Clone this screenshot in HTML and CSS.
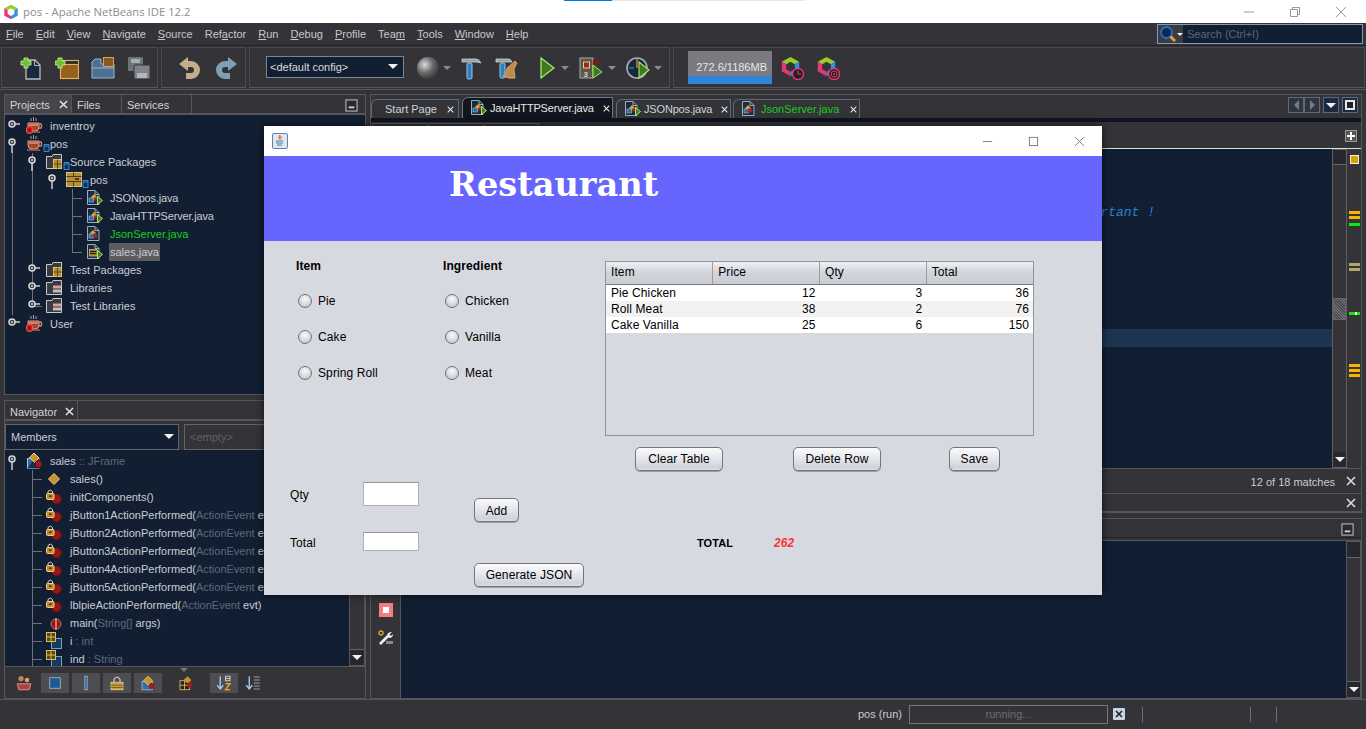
FILE: index.html
```html
<!DOCTYPE html>
<html lang="en">
<head>
<meta charset="utf-8">
<title>pos - Apache NetBeans IDE 12.2</title>
<link rel="stylesheet" href="styles.css">
</head>
<body>
<svg class="defs" xmlns="http://www.w3.org/2000/svg">
  <symbol id="x" viewBox="0 0 10 10"><path d="M1 1L9 9M9 1L1 9" fill="none" stroke="currentColor" stroke-width="1.6"/></symbol>
  <symbol id="min" viewBox="0 0 14 14"><rect x="1" y="1" width="12" height="12" fill="#2a2a2e" stroke="#d0d0d0"/><rect x="4" y="8" width="6" height="2" fill="#d0d0d0"/></symbol>
  <symbol id="cube" viewBox="0 0 24 24"><path d="M12 1L22 6.500L17 9.500L12 6.500L7 9.500L2 6.500Z" fill="#9acb2c"/><path d="M2 6.500L7 9.500V15L12 18V23L2 17.500Z" fill="#e8366f"/><path d="M22 6.500V17.500L12 23V18L17 15V9.500Z" fill="#2f8fe0"/></symbol>

  <symbol id="tc" viewBox="0 0 20 18"><path d="M13 7H18" stroke="#cfcfcf" stroke-width="1.500"/><circle cx="10" cy="7" r="3" fill="#3a3a3a" stroke="#d8d8d8" stroke-width="1.500"/><circle cx="10" cy="7" r="1" fill="#ddd"/></symbol>
  <symbol id="te" viewBox="0 0 20 18"><path d="M10 10V18" stroke="#cfcfcf" stroke-width="1.500"/><circle cx="10" cy="7" r="3" fill="#3a3a3a" stroke="#d8d8d8" stroke-width="1.500"/><circle cx="10" cy="7" r="1" fill="#ddd"/></symbol>

  <symbol id="cup" viewBox="0 0 24 18"><path d="M5 1V4M7.500 0V4M10 1V4" stroke="#a79c95"/><path d="M2 6H13V10Q13 14 9 14H6Q2 14 2 10Z" fill="#a5452e" stroke="#e2a18a"/><path d="M13 7H15Q16.500 9 15 11H12.500" fill="none" stroke="#d9876c" stroke-width="1.300"/><path d="M3 8H12" stroke="#efc0ae"/><path d="M1 15H14" stroke="#b9644c" stroke-width="1.400"/></symbol>
  <symbol id="cupl" viewBox="0 0 24 18"><use href="#cup"/><rect x="0.500" y="9.500" width="6" height="7" rx="2.500" fill="#c8201e" stroke="#f05050"/><rect x="2.500" y="11.500" width="2" height="3" fill="#7a1010"/></symbol>
  <symbol id="bdg" viewBox="0 0 24 18"><path d="M18 9.500H23V16.500H18Z" fill="#12304f" stroke="#2e8be0"/><path d="M18 11H23" stroke="#2e8be0"/></symbol>
  <symbol id="cupb" viewBox="0 0 24 18"><use href="#cup"/><use href="#bdg"/></symbol>
  <symbol id="fold" viewBox="0 0 24 18"><path d="M0.500 3.500H6L7 1.500H15.500V15.500H0.500Z" fill="#3a3b40" stroke="#c9c9c9"/><rect x="7.500" y="6.500" width="8" height="9" fill="#b78d36" stroke="#e2c36f"/><path d="M11.500 6.500V15.500M7.500 11H15.500" stroke="#5c4516"/></symbol>
  <symbol id="foldb" viewBox="0 0 24 18"><use href="#fold"/><use href="#bdg"/></symbol>
  <symbol id="foldl" viewBox="0 0 24 18"><path d="M0.500 3.500H6L7 1.500H15.500V15.500H0.500Z" fill="#3a3b40" stroke="#c9c9c9"/><rect x="7" y="6.500" width="8" height="3" fill="#d8a0a0"/><rect x="7" y="10.500" width="8" height="3" fill="#c0c0c0"/></symbol>
  <symbol id="pkg" viewBox="0 0 24 18"><rect x="0.500" y="1.500" width="15" height="14" fill="#b78d36" stroke="#e0c272"/><path d="M0.500 5.500H15.500M0.500 10.500H15.500M7.500 1.500V5.500M7.500 10.500V15.500" stroke="#4f3b12"/><rect x="9" y="7" width="4" height="2" fill="#4f3b12"/><use href="#bdg" x="-1"/></symbol>

  <symbol id="page" viewBox="0 0 24 18"><path d="M1.500 1.500H9L13 5.500V15.500H1.500Z" fill="#1b2c42" stroke="#9eacbb"/><path d="M9 1.500V5.500H13" fill="none" stroke="#9eacbb"/></symbol>
  <symbol id="jf" viewBox="0 0 24 18"><use href="#page"/><path d="M5 8L8 5L11 8L8 11Z" fill="#d6a12c"/><rect x="3" y="9" width="4.500" height="4" fill="#2c6aa8" stroke="#9ec4e6" stroke-width=".6"/><circle cx="9.500" cy="10" r="1.700" fill="#a52525"/><path d="M11.500 7.500L16.500 11.500L11.500 15.500Z" fill="#3f7a22" stroke="#a5e86a"/></symbol>
  <symbol id="js" viewBox="0 0 24 18"><use href="#page"/><path d="M4 8L7 5L10 8L7 11Z" fill="#d6a12c"/><rect x="3" y="9" width="4.500" height="4" fill="#2c6aa8" stroke="#9ec4e6" stroke-width=".6"/><circle cx="9" cy="10.500" r="2.300" fill="#a52525"/></symbol>
  <symbol id="jl" viewBox="0 0 24 18"><use href="#page"/><rect x="3.500" y="6.500" width="7.500" height="6.500" fill="#96752c" stroke="#e0c272" stroke-width=".7"/><path d="M4 8.500H10.500M4 10.500H10.500" stroke="#2d2208"/><path d="M11.500 7.500L16.500 11.500L11.500 15.500Z" fill="#3f7a22" stroke="#a5e86a"/></symbol>

  <symbol id="cls" viewBox="0 0 24 18"><path d="M1.500 6.500H13V16.500H1.500Z" fill="#2f6ba6" stroke="#a7c9e8"/><path d="M1.500 16.500L8 6.500H13V16.500Z" fill="#14324e"/><path d="M3.500 5.500L8 1L13 6L8.500 10.500Z" fill="#c8932c" stroke="#f0d080"/><circle cx="12.500" cy="12" r="3.500" fill="#a01c1c" stroke="#50100f"/></symbol>
  <symbol id="ctr" viewBox="0 0 24 18"><path d="M8 3.500L13.500 9L8 14.500L2.500 9Z" fill="#c8932c" stroke="#f0d080"/></symbol>
  <symbol id="mth" viewBox="0 0 24 18"><circle cx="10.500" cy="11" r="5" fill="#901818" stroke="#5a1010"/><rect x="0.500" y="5.500" width="7.500" height="6" rx="1" fill="#c0892a" stroke="#f0d080"/><path d="M2 5.500V3.500Q4.250 0.500 6.500 3.500V5.500" fill="none" stroke="#d8d8d8"/><rect x="3" y="7.500" width="2.500" height="1.500" fill="#4a2a05"/></symbol>
  <symbol id="mn" viewBox="0 0 24 18"><circle cx="10" cy="10" r="5" fill="#901818" stroke="#d06a60"/><path d="M10 4V16" stroke="#e4a090" stroke-width="1.400"/></symbol>
  <symbol id="fld" viewBox="0 0 24 18"><rect x="5.500" y="6.500" width="10" height="10" fill="#173a5c" stroke="#6fa4d0"/><rect x="0.500" y="0.500" width="9" height="9" fill="#5a4515" stroke="#e0bc5a"/><path d="M5 .5V9.500M.5 5H9.500" stroke="#e0bc5a"/></symbol>

  <symbol id="i-new" viewBox="0 0 24 24"><path d="M7 4H16L21 9V23H7Z" fill="#1a2a3c" stroke="#b6bcc2" stroke-width="1.300"/><path d="M15.500 4V9.500H21" fill="none" stroke="#b6bcc2"/><path d="M5 2H9V5H12V9H9V12H5V9H2V5H5Z" fill="#69c22c" stroke="#d4f0a8" stroke-width=".8"/></symbol>
  <symbol id="i-prj" viewBox="0 0 24 24"><rect x="5.500" y="4.500" width="18" height="18" fill="#98601a" stroke="#d8b070" stroke-width="1.200"/><rect x="5.500" y="4.500" width="18" height="4" fill="#35302a" stroke="#d8b070"/><path d="M3 2H7V5H10V9H7V12H3V9H0V5H3Z" fill="#69c22c" stroke="#d4f0a8" stroke-width=".8"/></symbol>
  <symbol id="i-opn" viewBox="0 0 24 24"><path d="M1 22V6L4 3H10V8H23V22Z" fill="#4c6f92" stroke="#9cb6cc"/><rect x="12.500" y="1.500" width="10" height="9" fill="#8a5a1c" stroke="#caa46a"/><path d="M1 12H23" stroke="#9cb6cc"/></symbol>
  <symbol id="i-sav" viewBox="0 0 24 24"><rect x="1" y="1" width="15" height="14" rx="1" fill="#6d7379"/><rect x="4" y="3" width="9" height="4" fill="#a8adb2"/><rect x="7" y="9" width="16" height="14" rx="1" fill="#7e848a" stroke="#34343a"/><rect x="10" y="17" width="10" height="5" fill="#b4b8bc"/></symbol>
  <symbol id="i-und" viewBox="0 0 24 24"><path d="M8 8H13A6 6 0 0 1 13 20H8" fill="none" stroke="#c4ae8c" stroke-width="6"/><path d="M1 8L10 1V15Z" fill="#c4ae8c"/></symbol>
  <symbol id="i-red" viewBox="0 0 24 24"><path d="M16 8H11A6 6 0 0 0 11 20H16" fill="none" stroke="#7f9fb6" stroke-width="6"/><path d="M23 8L14 1V15Z" fill="#7f9fb6"/></symbol>
  <symbol id="i-ham" viewBox="0 0 24 24"><path d="M3 3H17Q20 3 22 7L18 6H3Z" fill="#9a9ea3" stroke="#d0d4d8" stroke-width=".8"/><rect x="8" y="7" width="5" height="16" rx="1.500" fill="#2c7fc0" stroke="#9cc6e4"/></symbol>
  <symbol id="i-brm" viewBox="0 0 24 24"><path d="M1 3H13Q16 3 17 6H1Z" fill="#9a9ea3" stroke="#d0d4d8" stroke-width=".8"/><rect x="5" y="7" width="5" height="15" rx="1.500" fill="#2c7fc0" stroke="#9cc6e4"/><path d="M12 12L20 5L22 7L19 13L20 22Q13 23 8 20Q12 17 12 12Z" fill="#c08a48" stroke="#e8c48c" stroke-width=".7"/></symbol>
  <symbol id="i-run" viewBox="0 0 24 24"><path d="M6 2L19 12L6 22Z" fill="#3f7a22" stroke="#a5e86a" stroke-width="1.300"/></symbol>
  <symbol id="i-dbg" viewBox="0 0 24 24"><rect x="1" y="2" width="13" height="20" fill="#5a5648" stroke="#b0ab98"/><rect x="4.500" y="6" width="6" height="6" fill="#a02a20" stroke="#e0c8a0"/><path d="M14 4H22L17 10H14Z" fill="#7a1c16"/><path d="M14 9L23 16L14 22Z" fill="#3f7a22" stroke="#a5e86a"/><text x="4.500" y="20.500" class="svgnum">3</text></symbol>
  <symbol id="i-gau" viewBox="0 0 24 24"><circle cx="11" cy="12" r="10" fill="#15283c" stroke="#a8aeb4" stroke-width="1.600"/><path d="M11 3V12" stroke="#e08030" stroke-width="1.400"/><path d="M3 12H8" stroke="#2e7bc4" stroke-width="1.400"/><path d="M13 6L23 14L13 22Z" fill="#3f7a22" stroke="#a5e86a" stroke-width="1.100"/></symbol>
  <symbol id="i-pr1" viewBox="0 0 24 24"><use href="#cube" width="21" height="21"/><circle cx="18" cy="18" r="5.500" fill="#222" stroke="#e8366f" stroke-width="1.400"/><path d="M18 14.500V18H21" fill="none" stroke="#e8366f"/></symbol>
  <symbol id="i-pr2" viewBox="0 0 24 24"><use href="#cube" width="21" height="21"/><circle cx="18" cy="18" r="5.500" fill="#222" stroke="#e8366f" stroke-width="1.400"/><circle cx="18" cy="18" r="3" fill="none" stroke="#e8366f"/><circle cx="18" cy="18" r="1" fill="#e8366f"/></symbol>
</svg>

<header class="winbar">
  <svg class="winlogo"><use href="#cube"/></svg>
  <span class="wintitle">pos - Apache NetBeans IDE 12.2</span>
  <span class="loadstrip"><span class="loadfill"></span></span>
  <div class="winctl">
    <svg class="winbtn" viewBox="0 0 12 12"><path d="M1 6H11" stroke="#999" fill="none"/></svg>
    <svg class="winbtn" viewBox="0 0 12 12"><path d="M1.500 3.500H8.500V10.500H1.500ZM3.500 3.500V1.500H10.500V8.500H8.500" stroke="#999" fill="none"/></svg>
    <svg class="winbtn" viewBox="0 0 12 12"><path d="M1 1L11 11M11 1L1 11" stroke="#999" fill="none"/></svg>
  </div>
</header>

<nav class="menubar">
  <span><u>F</u>ile</span><span><u>E</u>dit</span><span><u>V</u>iew</span><span><u>N</u>avigate</span><span><u>S</u>ource</span><span>Ref<u>a</u>ctor</span><span><u>R</u>un</span><span><u>D</u>ebug</span><span><u>P</u>rofile</span><span>Tea<u>m</u></span><span><u>T</u>ools</span><span><u>W</u>indow</span><span><u>H</u>elp</span>
  <div class="search">
    <span class="searchicon">
      <svg class="searchglass" viewBox="0 0 16 16"><circle cx="6.500" cy="6.500" r="5.500" fill="#0d2a50" stroke="#2a6fc0" stroke-width="1.800"/><path d="M10.500 10.500L15 15" stroke="#e8a030" stroke-width="3"/></svg>
      <i class="caret white"></i>
    </span>
    <span class="searchtext">Search (Ctrl+I)</span>
  </div>
</nav>

<section class="toolbar">
  <div class="tgroup g1">
    <i class="grip"></i>
    <svg class="ti"><use href="#i-new"/></svg><svg class="ti"><use href="#i-prj"/></svg><svg class="ti"><use href="#i-opn"/></svg><svg class="ti"><use href="#i-sav"/></svg>
  </div>
  <div class="tgroup g2">
    <i class="grip"></i>
    <svg class="ti"><use href="#i-und"/></svg><svg class="ti"><use href="#i-red"/></svg>
  </div>
  <div class="tgroup g3">
    <i class="grip"></i>
    <div class="config"><span>&lt;default config&gt;</span><i class="caret white big"></i></div>
    <span class="globe"></span><i class="caret"></i>
    <svg class="ti m8"><use href="#i-ham"/></svg>
    <svg class="ti"><use href="#i-brm"/></svg>
    <svg class="ti m16"><use href="#i-run"/></svg><i class="caret c2"></i>
    <svg class="ti m10"><use href="#i-dbg"/></svg><i class="caret c5"></i>
    <svg class="ti m10"><use href="#i-gau"/></svg><i class="caret"></i>
  </div>
  <div class="tgroup g4">
    <i class="grip"></i>
    <div class="memory">272.6/1186MB</div>
    <svg class="ti m8"><use href="#i-pr1"/></svg><svg class="ti"><use href="#i-pr2"/></svg>
  </div>
</section>

<main class="workspace">
  <div class="leftcol">
    <section class="panel projects">
      <div class="ptabs">
        <span class="ptab active">Projects <svg class="xs"><use href="#x"/></svg></span>
        <span class="ptab files">Files</span>
        <span class="ptab services">Services</span>
        <svg class="minbtn"><use href="#min"/></svg>
      </div>
      <div class="tree">
        <div class="row"><span class="c"><svg><use href="#tc"/></svg></span><svg class="ic"><use href="#cupl"/></svg>inventroy</div>
        <div class="row"><span class="c"><svg><use href="#te"/></svg></span><svg class="ic"><use href="#cupb"/></svg>pos</div>
        <div class="row"><span class="c v"></span><span class="c v"><svg><use href="#te"/></svg></span><svg class="ic"><use href="#foldb"/></svg>Source Packages</div>
        <div class="row"><span class="c v"></span><span class="c v"></span><span class="c"><svg><use href="#te"/></svg></span><svg class="ic"><use href="#pkg"/></svg>pos</div>
        <div class="row tight"><span class="c v"></span><span class="c v"></span><span class="c"></span><span class="c j"></span><svg class="ic"><use href="#jf"/></svg>JSONpos.java</div>
        <div class="row tight"><span class="c v"></span><span class="c v"></span><span class="c"></span><span class="c j"></span><svg class="ic"><use href="#jf"/></svg>JavaHTTPServer.java</div>
        <div class="row green"><span class="c v"></span><span class="c v"></span><span class="c"></span><span class="c j"></span><svg class="ic"><use href="#js"/></svg>JsonServer.java</div>
        <div class="row"><span class="c v"></span><span class="c v"></span><span class="c"></span><span class="c e"></span><svg class="ic"><use href="#jl"/></svg><span class="sel">sales.java</span></div>
        <div class="row"><span class="c v"></span><span class="c v"><svg><use href="#tc"/></svg></span><svg class="ic"><use href="#fold"/></svg>Test Packages</div>
        <div class="row"><span class="c v"></span><span class="c v"><svg><use href="#tc"/></svg></span><svg class="ic"><use href="#foldl"/></svg>Libraries</div>
        <div class="row"><span class="c v"></span><span class="c e"><svg><use href="#tc"/></svg></span><svg class="ic"><use href="#foldl"/></svg>Test Libraries</div>
        <div class="row"><span class="c"><svg><use href="#tc"/></svg></span><svg class="ic"><use href="#cupl"/></svg>User</div>
      </div>
    </section>

    <section class="panel navigator">
      <div class="ptabs">
        <span class="ptab active nav">Navigator <svg class="xs"><use href="#x"/></svg></span>
      </div>
      <div class="navcombos">
        <div class="combo members"><span>Members</span><i class="caret white big"></i></div>
        <div class="combo empty"><span>&lt;empty&gt;</span></div>
      </div>
      <div class="navbody">
        <div class="tree navtree">
          <div class="row"><span class="c"><svg><use href="#te"/></svg></span><svg class="ic"><use href="#cls"/></svg>sales&nbsp;<b class="dim">:: JFrame</b></div>
          <div class="row"><span class="c"></span><span class="c j"></span><svg class="ic"><use href="#ctr"/></svg>sales()</div>
          <div class="row"><span class="c"></span><span class="c j"></span><svg class="ic"><use href="#mth"/></svg>initComponents()</div>
          <div class="row"><span class="c"></span><span class="c j"></span><svg class="ic"><use href="#mth"/></svg>jButton1ActionPerformed(<b class="dim">ActionEvent</b>&nbsp;evt)</div>
          <div class="row"><span class="c"></span><span class="c j"></span><svg class="ic"><use href="#mth"/></svg>jButton2ActionPerformed(<b class="dim">ActionEvent</b>&nbsp;evt)</div>
          <div class="row"><span class="c"></span><span class="c j"></span><svg class="ic"><use href="#mth"/></svg>jButton3ActionPerformed(<b class="dim">ActionEvent</b>&nbsp;evt)</div>
          <div class="row"><span class="c"></span><span class="c j"></span><svg class="ic"><use href="#mth"/></svg>jButton4ActionPerformed(<b class="dim">ActionEvent</b>&nbsp;evt)</div>
          <div class="row"><span class="c"></span><span class="c j"></span><svg class="ic"><use href="#mth"/></svg>jButton5ActionPerformed(<b class="dim">ActionEvent</b>&nbsp;evt)</div>
          <div class="row"><span class="c"></span><span class="c j"></span><svg class="ic"><use href="#mth"/></svg>lblpieActionPerformed(<b class="dim">ActionEvent</b>&nbsp;evt)</div>
          <div class="row"><span class="c"></span><span class="c j"></span><svg class="ic"><use href="#mn"/></svg>main(<b class="dim">String[]</b>&nbsp;args)</div>
          <div class="row"><span class="c"></span><span class="c j"></span><svg class="ic"><use href="#fld"/></svg>i&nbsp;<b class="dim">: int</b></div>
          <div class="row"><span class="c"></span><span class="c j"></span><svg class="ic"><use href="#fld"/></svg>ind&nbsp;<b class="dim">: String</b></div>
        </div>
        <div class="vscroll navscroll">
          <span class="track"></span>
          <span class="sbtn"><i class="caret white"></i></span>
        </div>
      </div>
      <div class="filters">
        <svg class="fi" viewBox="0 0 24 24"><circle cx="8" cy="6" r="3.500" fill="#c08a48"/><circle cx="16" cy="8" r="3" fill="#d8a868"/><path d="M3 13H21L19 21H5Z" fill="#b04040" stroke="#e8b0b0"/></svg>
        <span class="fb b1"><svg class="fi" viewBox="0 0 24 24"><rect x="5" y="5" width="14" height="14" fill="#1e5a92" stroke="#a8c8e4"/></svg></span>
        <span class="fb"><svg class="fi" viewBox="0 0 24 24"><rect x="10.500" y="3" width="3" height="18" fill="#1e5a92" stroke="#a8c8e4"/></svg></span>
        <span class="fb"><svg class="fi" viewBox="0 0 24 24"><rect x="4" y="11" width="16" height="10" fill="#c89a4a" stroke="#f0d080"/><path d="M8 11V7Q12 1 16 7V11" fill="none" stroke="#d8d8d8" stroke-width="1.500"/><path d="M4 15H20M4 18H20" stroke="#6a4c14"/></svg></span>
        <span class="fb"><svg class="fi" viewBox="0 0 24 24"><path d="M4 10H18V21H4Z" fill="#2f6ba6" stroke="#a7c9e8"/><path d="M6 9L12 3L18 9L12 15Z" fill="#c8932c" stroke="#f0d080"/><circle cx="17" cy="16" r="4" fill="#a01c1c"/></svg></span>
        <svg class="fi free" viewBox="0 0 24 24"><rect x="4" y="9" width="13" height="12" fill="#2a2410" stroke="#f0d080"/><path d="M4 15H17M10 9V21" stroke="#f0d080"/><path d="M9 8L14 3L19 8L14 13Z" fill="#c8932c"/><circle cx="17" cy="14" r="3.500" fill="#a01c1c"/></svg>
        <span class="fb az"><svg class="fi" viewBox="0 0 24 24"><path d="M7 3V19M3 15L7 20L11 15" fill="none" stroke="#a8c8e4" stroke-width="1.800"/><path d="M14 3H20V9H14ZM14 6H20" fill="none" stroke="#d0d0d0" stroke-width="1.400"/><path d="M14 13H20L14 21H20" fill="none" stroke="#e0a030" stroke-width="2"/></svg></span>
        <svg class="fi m6" viewBox="0 0 24 24"><path d="M7 3V19M3 15L7 20L11 15" fill="none" stroke="#a8c8e4" stroke-width="1.800"/><path d="M13 4H21M13 8H21M13 12H21M13 16H21M13 20H21" stroke="#a0a0a0" stroke-width="1.600"/></svg>
      </div>
    </section>
  </div>

  <div class="rightcol">
    <section class="editorpanel">
      <div class="etabs">
        <span class="etab start">Start Page <svg class="xs sm"><use href="#x"/></svg></span>
        <span class="etab active http tight"><svg class="fic"><use href="#jf"/></svg>JavaHTTPServer.java <svg class="xs sm"><use href="#x"/></svg></span>
        <span class="etab jpos tight"><svg class="fic"><use href="#jf"/></svg>JSONpos.java <svg class="xs sm"><use href="#x"/></svg></span>
        <span class="etab jsrv"><svg class="fic"><use href="#js"/></svg><span class="greentext">JsonServer.java</span> <svg class="xs sm"><use href="#x"/></svg></span>
        <div class="tabctl">
          <span class="navpair"><span class="nb"><i class="tri left"></i></span><span class="nb"><i class="tri right"></i></span></span>
          <span class="nb dark"><i class="caret white big"></i></span>
          <span class="nb dark"><i class="sq"></i></span>
        </div>
      </div>
      <div class="darkstrip"></div>
      <div class="edtools">
        <span class="edtab"></span><span class="edtab"></span><span class="edtab"></span>
        <svg class="splitic" viewBox="0 0 12 12"><rect x=".5" y=".5" width="11" height="11" fill="#555" stroke="#999"/><path d="M6 2V10M2 6H10" stroke="#fff" stroke-width="2"/></svg>
      </div>
      <div class="edbody">
        <div class="code">
          <div class="codeline comment">rtant !</div>
          <div class="codeline current"></div>
        </div>
        <div class="vscroll edscroll">
          <span class="sbtn"><i class="caret white up"></i></span>
          <span class="track"></span>
          <span class="thumb"></span>
          <span class="track"></span>
          <span class="sbtn"><i class="caret white"></i></span>
        </div>
        <div class="stripe">
          <i class="box"></i>
          <i class="mk y s1st"></i><i class="mk y s2nd"></i><i class="mk g s3rd"></i>
          <i class="mk o s4th"></i><i class="mk o s2nd"></i>
          <i class="mk w s5th"></i>
          <i class="mk y s6th"></i><i class="mk y s2nd"></i><i class="mk y s2nd"></i>
        </div>
      </div>
      <div class="findbar"><span class="matches">12 of 18 matches</span><svg class="xl"><use href="#x"/></svg></div>
      <div class="findbar second"><svg class="xl"><use href="#x"/></svg></div>
    </section>

    <section class="output">
      <div class="ohead"><svg class="minbtn"><use href="#min"/></svg></div>
      <div class="ostrip"></div>
      <div class="obody">
        <div class="oside">
          <svg class="stop" viewBox="0 0 14 14"><rect width="14" height="14" fill="#f08080"/><rect x="4" y="4" width="6" height="6" fill="#fff"/></svg>
          <svg class="wrench" viewBox="0 0 16 16"><circle cx="3" cy="3" r="2" fill="none" stroke="#e0a030" stroke-width="1.400"/><path d="M2 14L10 6" stroke="#eee" stroke-width="2.600"/><path d="M9 6Q9 2 14 2L11.500 4.500L13 6L15 4Q15 8 11 8Z" fill="#eee"/><path d="M8 11H15V14H8Z" fill="#888"/></svg>
        </div>
        <div class="oconsole"></div>
        <div class="vscroll oscroll">
          <span class="sbtn"><i class="caret white up"></i></span>
          <span class="track"></span>
          <span class="sbtn"><i class="caret white"></i></span>
        </div>
      </div>
    </section>
  </div>
</main>

<footer class="status">
  <span class="runlabel">pos (run)</span>
  <span class="progress">running...</span>
  <svg class="pcancel" viewBox="0 0 12 12"><rect width="12" height="12" rx="1" fill="#c8d4e4"/><path d="M3 3L9 9M9 3L3 9" stroke="#222" stroke-width="1.600"/></svg>
  <i class="sep s1"></i><i class="sep s2"></i><i class="sep s3"></i>
</footer>

<div class="dialog">
  <div class="dtitle">
    <svg class="javaic" viewBox="0 0 16 16"><rect x=".5" y=".5" width="15" height="15" rx="1.500" fill="#dfe8f0" stroke="#5d84a6"/><path d="M8 2Q6 5 8 6Q10 4 8.500 3" fill="none" stroke="#e0702a" stroke-width="1.200"/><path d="M4 8H11M4 10H11M5 12H10" stroke="#4d7fa6"/></svg>
    <div class="dctl">
      <svg viewBox="0 0 12 12"><path d="M1 6H11" stroke="#777" fill="none"/></svg>
      <svg viewBox="0 0 12 12"><rect x="1.500" y="1.500" width="9" height="9" stroke="#777" fill="none"/></svg>
      <svg viewBox="0 0 12 12"><path d="M1 1L11 11M11 1L1 11" stroke="#777" fill="none"/></svg>
    </div>
  </div>
  <div class="dhead"><h1>Restaurant</h1></div>
  <div class="dbody">
    <div class="dtop">
      <div class="optcol">
        <h2>Item</h2>
        <label class="radio"><i></i>Pie</label>
        <label class="radio"><i></i>Cake</label>
        <label class="radio"><i></i>Spring Roll</label>
      </div>
      <div class="optcol ing">
        <h2>Ingredient</h2>
        <label class="radio"><i></i>Chicken</label>
        <label class="radio"><i></i>Vanilla</label>
        <label class="radio"><i></i>Meat</label>
      </div>
      <div class="tablecol">
        <div class="tablebox">
          <table>
            <thead><tr><th>Item</th><th>Price</th><th>Qty</th><th>Total</th></tr></thead>
            <tbody>
              <tr><td>Pie Chicken</td><td>12</td><td>3</td><td>36</td></tr>
              <tr><td>Roll Meat</td><td>38</td><td>2</td><td>76</td></tr>
              <tr><td>Cake Vanilla</td><td>25</td><td>6</td><td>150</td></tr>
            </tbody>
          </table>
        </div>
        <div class="tablebtns">
          <button class="btn clear">Clear Table</button>
          <button class="btn del">Delete Row</button>
          <button class="btn save">Save</button>
        </div>
      </div>
    </div>
    <div class="dbottom">
      <div class="fields">
        <div class="field qty"><span>Qty</span><i class="input"></i></div>
        <div class="field tot"><span>Total</span><i class="input"></i></div>
      </div>
      <div class="actions">
        <button class="btn add">Add</button>
        <button class="btn gen">Generate JSON</button>
      </div>
      <div class="sum"><b>TOTAL</b><em>262</em></div>
    </div>
  </div>
</div>
</body>
</html>
```
FILE: styles.css
```css
* { box-sizing: border-box; }
html, body { margin: 0; padding: 0; }
body {
  width: 1366px; height: 729px; overflow: hidden; position: relative;
  background: #343338; color: #cfd3d9;
  font: 11px "Liberation Sans", Arial, sans-serif;
  display: flex; flex-direction: column;
}
.defs { display: none; }
i { display: block; font-style: normal; }
svg { display: block; flex: none; }
.tight { letter-spacing: -.17px; }

/* Window title */
.winbar { height: 23px; background: #fff; display: flex; align-items: center; padding-left: 3px; flex: none; }
.winlogo { width: 16px; height: 16px; }
.wintitle { margin-left: 4px; color: #8c8c8c; font: 11.3px "Open Sans", sans-serif; }
.loadstrip { width: 241px; height: 1px; background: #e6e6e6; margin-left: 373px; align-self: flex-start; }
.loadfill { display: block; width: 48px; height: 1px; background: #0078d7; }
.winctl { margin-left: auto; display: flex; gap: 34px; padding-right: 19px; }
.winbtn { width: 12px; height: 12px; }

/* Menu */
.menubar { height: 22px; flex: none; display: flex; align-items: center; gap: 12px; padding-left: 6px; color: #c5c9cf; font-size: 11px; }
.menubar u { text-underline-offset: 1px; }
.search { margin-left: auto; margin-right: 3px; width: 206px; height: 20px; border: 1px solid #7d9cc0; display: flex; background: #121f33; }
.searchicon { width: 25px; background: #3c3b40; display: flex; align-items: center; gap: 1px; padding-left: 2px; flex: none; }
.searchglass { width: 16px; height: 16px; }
.searchtext { color: #5d6673; padding-left: 4px; line-height: 18px; font-size: 11px; }

/* Toolbar */
.toolbar { height: 45px; flex: none; display: flex; gap: 3px; padding: 1px; border-top: 1px solid #232327; border-bottom: 1px solid #56565b; }
.tgroup { display: flex; align-items: center; padding-left: 5px; border: 1px solid #48484d; border-bottom-color: #56565b; }
.g1 { width: 157px; } .g2 { width: 85px; padding-left: 4px; } .g3 { width: 421px; padding-left: 4px; } .g4 { flex: 1; padding-left: 4px; }
.grip { width: 5px; height: 30px; background: radial-gradient(circle, #6d6d70 40%, transparent 50%) 0 0/2px 2px; }
.ti { width: 24px; height: 24px; margin-left: 12px; }
.grip + .ti { margin-left: 7px; }
.ti.m8 { margin-left: 8px; } .ti.m10 { margin-left: 10px; } .ti.m16 { margin-left: 16px; } .fi.m6 { margin-left: 6px; }
.caret { width: 0; height: 0; border: 4px solid transparent; border-top: 4px solid #8b8b8e; border-bottom: 0; margin-left: 4px; flex: none; }
.caret.c2 { margin-left: 2px; } .caret.c5 { margin-left: 5px; }
.caret.white { border-top-color: #f2f2f2; margin-left: 0; border-width: 3px 3px 0; }
.caret.white.big { border-width: 5px 5px 0; }
.sbtn .caret.white { border-width: 5px 5px 0; }
.sbtn .caret.white.up { border-width: 0 5px 5px; border-color: transparent transparent #f2f2f2; }
.config { width: 138px; height: 22px; margin-left: 7px; margin-top: -2px; background: #121f33; border: 1px solid #7b8592; display: flex; align-items: center; justify-content: space-between; padding: 0 5px 0 3px; font-size: 11px; color: #d8dade; }
.globe { width: 22px; height: 22px; margin-left: 13px; border-radius: 50%; background: radial-gradient(circle at 35% 35%, #dcdcdc, #6c6c6c 40%, #2a2a2a 85%); }
.memory { width: 84px; height: 33px; margin-left: 5px; background: linear-gradient(#7b7a80 25px, #2f86d8 25px); color: #e6e6e8; font-size: 11px; display: flex; align-items: center; justify-content: flex-end; padding: 0 5px 2px 0; }

/* Workspace */
.workspace { flex: 1; min-height: 0; display: flex; gap: 4px; padding: 4px 4px 0 4px; }
.leftcol { width: 362px; display: flex; flex-direction: column; gap: 5px; }
.rightcol { width: 992px; display: flex; flex-direction: column; }
.panel { border: 1px solid #56565b; display: flex; flex-direction: column; min-height: 0; }
.projects { height: 301px; }
.navigator { flex: 1; }
.ptabs { height: 20px; flex: none; display: flex; align-items: stretch; border-bottom: 2px solid #56565b; }
.ptab { display: flex; align-items: center; padding: 1px 0 0 5px; border-right: 1px solid #56565b; color: #cfd3d9; font-size: 11px; }
.ptab.active { width: 67px; background: #46454b; justify-content: space-between; padding-right: 3px; }
.ptab.files { width: 50px; } .ptab.services { width: 70px; }
.ptab.nav { width: 73px; background: transparent; padding-top: 3px; }
.xs { width: 9px; height: 9px; color: #e6e6e6; }
.xs.sm { width: 7px; height: 7px; margin-left: auto; }
.minbtn { width: 13px; height: 13px; margin: 2px 7px 0 auto; align-self: center; }
.tree { flex: 1; background: #121f33; overflow: hidden; color: #c9cdd4; padding-top: 2px; }
.row { height: 18px; margin-left: -3px; display: flex; align-items: center; white-space: nowrap; font-size: 11px; }
.row.green { color: #18cf18; }
.c { width: 20px; height: 18px; flex: none; }
.c svg { width: 20px; height: 18px; }
.c.v { background: linear-gradient(#6f7278, #6f7278) 10px 0/1px 100% no-repeat; }
.c.j { background: linear-gradient(#6f7278, #6f7278) 10px 0/1px 100% no-repeat, linear-gradient(#6f7278, #6f7278) 10px 9px/10px 1px no-repeat; }
.c.e { background: linear-gradient(#6f7278, #6f7278) 10px 0/1px 9px no-repeat, linear-gradient(#6f7278, #6f7278) 10px 9px/10px 1px no-repeat; }
.ic { width: 24px; height: 18px; margin-left: 4px; flex: none; }
.sel { background: #5c5c5f; padding: 0 1px; margin-left: -1px; line-height: 18px; }
.dim { font-weight: normal; color: #5d6a7a; }

.navcombos { height: 29px; flex: none; display: flex; align-items: center; gap: 5px; padding-top: 2px; }
.combo { height: 26px; display: flex; align-items: center; padding: 0 5px; background: #121f33; border: 1px solid #63646a; font-size: 11px; }
.combo.members { width: 174px; justify-content: space-between; padding-right: 4px; color: #c9cdd4; }
.combo.empty { width: 180px; background: #343338; color: #5f6368; }
.navbody { height: 216px; flex: none; display: flex; background: #121f33; }
.vscroll { width: 16px; flex: none; display: flex; flex-direction: column; background: #343338; border: 1px solid #56565b; }
.track { flex: 1; display: block; border-bottom: 1px solid #66666b; }
.sbtn { height: 15px; flex: none; display: flex; align-items: center; justify-content: center; background: #27282f; }
.filters { flex: 1; display: flex; align-items: center; padding-left: 10px; border-top: 1px solid #56565b; position: relative; }
.filters::before { content: ""; position: absolute; left: 175px; top: 1px; border: 4px solid transparent; border-top-color: #77777b; border-bottom: 0; }
.fi { width: 18px; height: 18px; }
.fb { width: 28px; height: 20px; margin-left: 3px; background: #4d4d52; display: flex; align-items: center; justify-content: center; }
.fb.b1 { margin-left: 8px; }
.fi.free { margin-left: 15px; }
.fb.az { margin-left: 15px; }

/* Editor */
.editorpanel { height: 419px; flex: none; display: flex; flex-direction: column; border: 1px solid #56565b; border-top: 0; }
.etabs { height: 24px; flex: none; display: flex; align-items: flex-end; gap: 3px; border-top: 1px solid #56565b; }
.etab { height: 19px; display: flex; align-items: center; border: 1px solid #5a6b80; border-bottom: 0; border-top-left-radius: 6px; color: #cfd3d9; font-size: 11px; padding: 0 2px 0 7px; }
.etab.start { width: 88px; padding-left: 13px; padding-right: 4px; }
.etab.http { width: 151px; }
.etab.jpos { width: 115px; }
.etab.jsrv { width: 127px; margin-left: -1px; }
.etab.active { height: 21px; background: #14161e; color: #e8e8e8; border-color: #6c7787; }
.fic { width: 24px; height: 18px; margin-right: -4px; }
.greentext { color: #18cf18; }
.tabctl { margin-left: auto; display: flex; gap: 3px; align-self: flex-start; margin-top: 2px; padding-right: 3px; }
.navpair { display: flex; }
.nb { width: 16px; height: 16px; border: 1px solid #566a80; display: flex; align-items: center; justify-content: center; background: #33343b; }
.nb.dark { background: #1a2a40; }
.tri { width: 0; height: 0; border: 5px solid transparent; }
.tri.left { border-right-color: #6b7f92; border-left: 0; }
.tri.right { border-left-color: #6b7f92; border-right: 0; }
.sq { width: 10px; height: 10px; border: 2px solid #e6e6e6; background: #222; }
.darkstrip { height: 4px; flex: none; background: #0e1520; }
.edtools { height: 26px; flex: none; display: flex; padding: 1px 0 0 1px; align-items: flex-start; gap: 1px; }
.edtab { width: 55px; height: 6px; border: 1px solid #56565b; }
.splitic { width: 12px; height: 12px; margin: 7px 4px 0 auto; }
.edbody { height: 320px; flex: none; display: flex; border-top: 1px solid #ddd; }
.code { flex: 1; background: #121f33; padding-top: 55px; }
.codeline { height: 18px; }
.comment { font: italic 13px/18px "Liberation Mono", monospace; color: #2f7fcf; text-align: right; padding-right: 177px; }
.current { background: #1d3550; margin-top: 107px; }
.edscroll { width: 15px; border-color: #5f5f64; }
.edscroll .sbtn { border-bottom: 1px solid #66666b; }
.edscroll .sbtn:last-child { border-bottom: 0; }
.edscroll .track { border-bottom: 0; }
.thumb { height: 22px; flex: none; display: block; border: 1px solid #66666b; background: repeating-linear-gradient(45deg, #4a4a4f 0 1px, #6d6d72 1px 2px); }
.stripe { width: 14px; flex: none; display: flex; flex-direction: column; align-items: center; padding-top: 6px; }
.box { width: 9px; height: 9px; background: #dba100; border: 1px solid #f2f2f2; }
.mk { width: 11px; height: 3px; }
.mk.y { background: #f7b500; } .mk.g { background: #14e614; } .mk.o { background: #b0a868; }
.mk.w { background: linear-gradient(90deg, #14e614 55%, #fff 55% 70%, #14e614 70%); }
.s1st { margin-top: 47px; } .s2nd { margin-top: 2px; } .s3rd { margin-top: 4px; } .s4th { margin-top: 37px; } .s5th { margin-top: 41px; } .s6th { margin-top: 49px; }
.findbar { height: 25px; flex: none; display: flex; align-items: center; justify-content: flex-end; border-top: 1px solid #56565b; padding-right: 5px; color: #c9cdd4; font-size: 11px; gap: 11px; }
.matches { padding-top: 1px; }
.findbar.second { height: 20px; border-bottom: 1px solid #56565b; flex: 1; }
.xl { width: 10px; height: 10px; color: #dcdcdc; }

/* Output */
.output { flex: 1; display: flex; flex-direction: column; border: 1px solid #56565b; margin-top: 5px; min-height: 0; }
.ohead { height: 18px; flex: none; display: flex; align-items: center; }
.ostrip { height: 4px; flex: none; border-top: 1px solid #232327; border-bottom: 1px solid #56565b; }
.obody { flex: 1; display: flex; min-height: 0; }
.oside { width: 30px; flex: none; display: flex; flex-direction: column; align-items: center; border-right: 1px solid #56565b; padding-top: 62px; gap: 13px; }
.stop { width: 14px; height: 14px; }
.wrench { width: 16px; height: 16px; }
.oconsole { flex: 1; background: #121f33; }
.oscroll { width: 15px; }
.oscroll .track { border-top: 1px solid #66666b; }

/* Status */
.status { height: 30px; flex: none; border-top: 1px solid #56565b; display: flex; align-items: center; padding: 0 0 1px 858px; font-size: 11px; }
.runlabel { color: #c9cdd4; width: 51px; }
.progress { width: 199px; height: 19px; border: 1px solid #77777b; color: #6f7075; display: flex; align-items: center; justify-content: center; }
.pcancel { width: 12px; height: 12px; margin-left: 5px; }
.sep { width: 1px; height: 15px; background: #69707c; }
.s1 { margin-left: 17px; } .s2 { margin-left: 107px; } .s3 { margin-left: 25px; }

/* Java dialog */
.dialog { position: absolute; left: 264px; top: 126px; width: 838px; height: 469px; background: #d6d9e0; color: #000; font: 12px "Liberation Sans", Arial, sans-serif; letter-spacing: .1px; display: flex; flex-direction: column; box-shadow: 0 0 9px rgba(0, 0, 0, .65); }
.dtitle { height: 30px; flex: none; background: #fff; display: flex; align-items: center; padding-left: 8px; }
.javaic { width: 16px; height: 16px; margin-top: -1px; }
.dctl { margin-left: auto; display: flex; gap: 35px; padding-right: 17px; }
.dctl svg { width: 11px; height: 11px; }
.dhead { height: 85px; flex: none; background: #6666ff; padding-left: 185px; }
.dhead h1 { margin: 0; color: #fff; font: bold 33.6px/56px "DejaVu Serif", serif; letter-spacing: 0; }
.dbody { flex: 1; display: flex; flex-direction: column; }
.dtop { height: 241px; flex: none; display: flex; padding: 20px 0 0 32px; }
.optcol { width: 147px; margin-top: -2px; }
.optcol.ing { width: 162px; }
.optcol h2 { margin: 0 0 10px; font-size: 12px; line-height: 14px; font-weight: bold; }
.radio { height: 36px; display: flex; align-items: center; gap: 6px; padding-left: 2px; }
.radio i { width: 14px; height: 14px; border-radius: 50%; border: 1px solid #6f727a; background: radial-gradient(circle at 50% 35%, #fafbfc, #d2d5dc 60%, #b4b7bf); }
.tablecol { width: 429px; }
.tablebox { height: 175px; border: 1px solid #8f939b; overflow: hidden; }
table { width: 427px; border-collapse: collapse; table-layout: fixed; }
th { height: 22px; padding: 0 5px 1px; font-weight: normal; text-align: left; border-right: 1px solid #9a9da4; border-bottom: 1px solid #777a80; background: linear-gradient(#f0f1f4, #d2d5dc 45%, #c8cbd2 100%); }
th:last-child { border-right: 0; }
td { height: 16px; padding: 0 4px 0 5px; background: #fff; text-align: right; line-height: 16px; }
td:first-child { text-align: left; }
tbody tr:nth-child(2) td { background: #f2f2f2; }
.tablebtns { display: flex; margin-top: 11px; padding-left: 30px; }
.btn { height: 24px; padding: 0; border: 1px solid #73767d; border-radius: 5px; background: linear-gradient(#fbfbfc, #e6e8ed 45%, #cfd2da 90%, #e0e2e8); color: #000; font: 12px "Liberation Sans", Arial, sans-serif; letter-spacing: .1px; box-shadow: 0 1px 0 #9b9ea6; }
.clear { width: 88px; } .del { width: 88px; margin-left: 70px; } .save { width: 51px; margin-left: 68px; }
.dbottom { flex: 1; display: flex; padding-left: 26px; }
.fields { width: 129px; }
.field { display: flex; justify-content: space-between; }
.field span { line-height: 24px; }
.field.qty { height: 24px; }
.field.qty span { padding-top: 1px; }
.field.tot { height: 19px; margin-top: 26px; align-items: center; }
.field.tot span { padding-top: 2px; }
.input { width: 56px; height: 24px; background: #fff; border: 1px solid #aeb1b7; border-top-color: #94979d; }
.tot .input { height: 19px; }
.actions { margin-left: 55px; padding-top: 16px; width: 110px; display: flex; flex-direction: column; align-items: flex-start; gap: 41px; }
.add { width: 45px; padding-top: 1px; } .gen { width: 110px; }
.sum { margin-left: 113px; padding-top: 54px; display: flex; font-size: 11px; line-height: 14px; }
.sum b { width: 77px; }
.sum em { font-size: 12px; font-weight: bold; color: #ff3333; }
.svgnum { font: bold 8px "Liberation Sans", sans-serif; fill: #d8d4c4; }
```
